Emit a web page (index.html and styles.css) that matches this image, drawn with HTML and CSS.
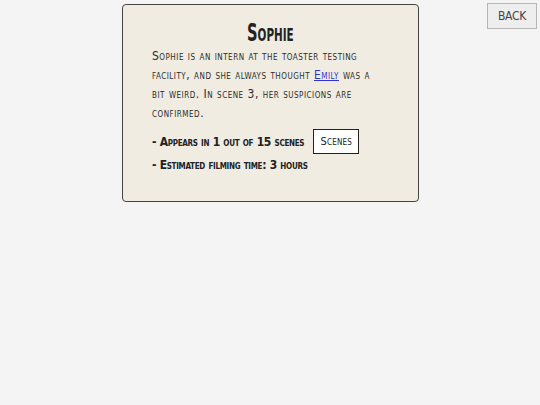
FILE: index.html
```html
<!DOCTYPE html>
<html lang="en">
<head>
<meta charset="utf-8">
<title>Sophie</title>
<link rel="stylesheet" href="styles.css">
</head>
<body>
<div class="page">
  <section class="card">
    <h1 class="name"><span class="name-text">Sophie</span></h1>
    <p class="bio">Sophie is an intern at the toaster testing facility, and she always thought <a href="#emily">Emily</a> was a bit weird. In scene 3, her suspicions are confirmed.</p>
    <ul class="facts">
      <li class="fact">- Appears in 1 out of 15 scenes <button class="scenes-btn" type="button">Scenes</button></li>
      <li class="fact">- Estimated filming time: 3 hours</li>
    </ul>
  </section>
  <button class="back-btn" type="button">Back</button>
</div>
</body>
</html>
```

FILE: styles.css
```css
html, body {
  margin: 0;
  padding: 0;
  background: #f4f4f4;
}

body {
  font-family: "DejaVu Sans Condensed", "DejaVu Sans", sans-serif;
  font-variant: small-caps;
  color: #222;
}

/* card on the left, back button pushed to the right edge */
.page {
  display: flex;
  align-items: flex-start;
  box-sizing: border-box;
  width: 540px;
  height: 405px;
  padding: 3px 3px 0 122px;
}

.card {
  box-sizing: border-box;
  width: 297px;
  height: 198px;
  margin-top: 1px;
  padding: 14px 14px 15px 29px;
  background: #f0ece1;
  border: 1px solid #444;
  border-radius: 4px;
}

.name {
  margin: 0;
  text-align: center;
  font-size: 24px;
  font-weight: bold;
  line-height: 28px;
  padding-right: 16px;
}

.name-text {
  display: inline-block;
  transform: scaleX(0.68);
}

.bio {
  margin: 0;
  width: 222px;
  font-size: 12px;
  line-height: 19px;
  letter-spacing: 0.5px;
  color: #2c2c2c;
}

.bio a {
  color: #3434cc;
}

.facts {
  list-style: none;
  margin: 6px 0 0;
  padding: 0;
}

.fact {
  font-size: 12px;
  font-weight: bold;
  letter-spacing: -0.3px;
  line-height: 22px;
  display: flex;
  align-items: center;
  gap: 9px;
}

.scenes-btn {
  font: inherit;
  font-weight: normal;
  font-size: 11px;
  letter-spacing: 0.2px;
  background: #fff;
  border: 1px solid #222;
  padding: 0 4px;
  width: 46px;
  height: 25px;
  color: #222;
}

.back-btn {
  margin-left: auto;
  width: 50px;
  height: 26px;
  font-family: inherit;
  font-size: 12px;
  letter-spacing: -0.3px;
  background: #eeeeee;
  border: 1px solid #b5b5b5;
  color: #444;
  text-transform: uppercase;
  padding: 0;
}
```
